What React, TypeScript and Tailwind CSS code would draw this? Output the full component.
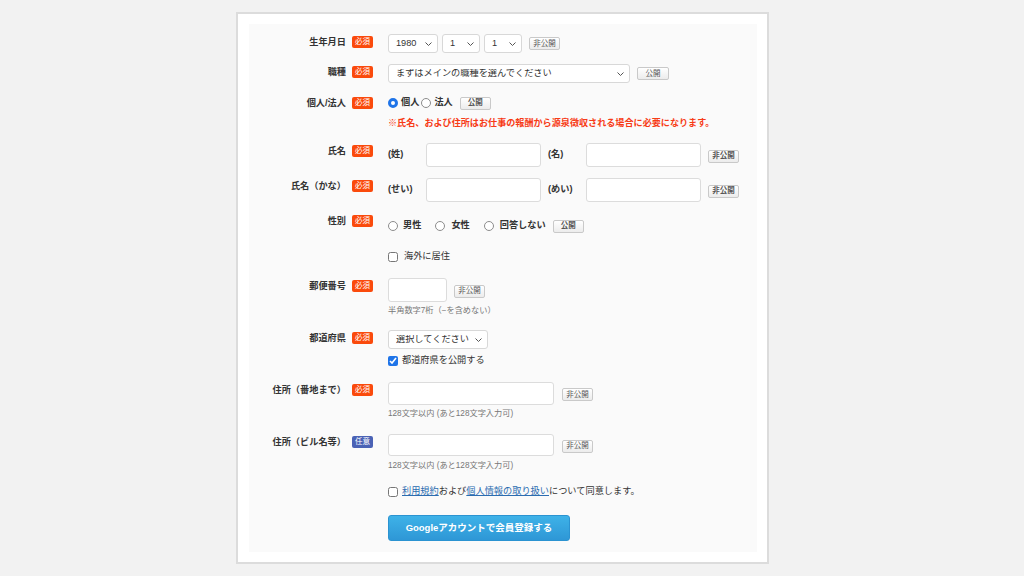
import React from "react";

const Badge = ({ optional = false }: { optional?: boolean }) =>
  optional ? (
    <span className="inline-flex h-[12px] w-[21px] shrink-0 items-center justify-center rounded-[2px] bg-[#4a62b5] text-[7.5px] leading-none text-white">
      任意
    </span>
  ) : (
    <span className="inline-flex h-[12px] w-[21px] shrink-0 items-center justify-center rounded-[2px] bg-[#fa4a0c] text-[7.5px] leading-none text-white">
      必須
    </span>
  );

function Vis({ label = "非公開", w = "w-[31px]" }: { label?: string; w?: string }) {
  return (
    <span
      className={`inline-flex h-[13px] ${w} shrink-0 items-center justify-center rounded-[2px] border border-[#c9c9c9] bg-gradient-to-b from-white to-[#ececec] text-[7.5px] leading-none text-[#555]`}
    >
      {label}
    </span>
  );
}

function Chevron() {
  return (
    <svg
      width="7"
      height="4"
      viewBox="0 0 7 4"
      className="pointer-events-none absolute right-[6px] top-1/2 -translate-y-1/2"
    >
      <path d="M0.5 0.5L3.5 3.5L6.5 0.5" stroke="#555" strokeWidth="1" fill="none" />
    </svg>
  );
}

function Select({ value, w, h = "h-[19px]" }: { value: string; w: string; h?: string }) {
  return (
    <div className={`relative ${w} ${h} shrink-0`}>
      <select
        defaultValue={value}
        className="block h-full w-full appearance-none rounded-[3px] border border-[#d8d8d8] bg-white pl-[7px] text-[9.2px] leading-none text-[#333] outline-none"
      >
        <option>{value}</option>
      </select>
      <Chevron />
    </div>
  );
}

function Radio({ checked = false }: { checked?: boolean }) {
  return (
    <input
      type="radio"
      defaultChecked={checked}
      className="m-0 block h-[10px] w-[10px] shrink-0 appearance-none rounded-full border border-[#8c8c8c] bg-white checked:border-[3px] checked:border-[#1f74e8]"
    />
  );
}

function Check({ checked = false }: { checked?: boolean }) {
  return (
    <input
      type="checkbox"
      defaultChecked={checked}
      className="m-0 block h-[10px] w-[10px] shrink-0 accent-[#1f74e8]"
    />
  );
}

function Row({
  label,
  optional = false,
  className = "",
  children,
}: {
  label: string;
  optional?: boolean;
  className?: string;
  children: React.ReactNode;
}) {
  return (
    <div className={`flex ${className}`}>
      <div className="flex w-[124px] shrink-0 items-center justify-end gap-[6px] self-start pt-[2px]">
        <span className="text-[9.2px] font-bold leading-[12px] text-[#333]">{label}</span>
        <Badge optional={optional} />
      </div>
      <div className="ml-[15px] min-w-0 flex-1">{children}</div>
    </div>
  );
}

const Hint = ({ children }: { children: React.ReactNode }) => (
  <div className="mt-[3px] h-[12px] text-[8.2px] leading-[12px] text-[#777]">{children}</div>
);

export default function App() {
  return (
    <div className="min-h-screen bg-[#f2f2f2] pt-[12px] font-['Liberation_Sans','Noto_Sans_CJK_JP',sans-serif] text-[#333]">
      <div className="ml-[236px] w-[533px] border-2 border-[#dcdcdc] bg-white pb-[10px] pl-[11px] pr-[10px] pt-[10px]">
        <div className="bg-[#fafafa] pb-[11px] pt-[10px]">
          {/* 生年月日 */}
          <Row label="生年月日">
            <div className="flex items-center">
              <Select value="1980" w="w-[50px]" />
              <div className="ml-[4px]">
                <Select value="1" w="w-[38px]" />
              </div>
              <div className="ml-[4px]">
                <Select value="1" w="w-[38px]" />
              </div>
              <div className="ml-[7px] flex">
                <Vis />
              </div>
            </div>
          </Row>

          {/* 職種 */}
          <Row label="職種" className="mt-[11px]">
            <div className="flex items-center gap-[7px]">
              <Select value="まずはメインの職種を選んでください" w="w-[242px]" />
              <Vis label="公開" w="w-[32px]" />
            </div>
          </Row>

          {/* 個人/法人 */}
          <Row label="個人/法人" className="mt-[12px]">
            <div className="flex h-[16px] items-center text-[9.2px] font-bold">
              <Radio checked />
              <span className="ml-[3px]">個人</span>
              <span className="ml-[2px] flex">
                <Radio />
              </span>
              <span className="ml-[3px]">法人</span>
              <span className="ml-[7px] flex">
                <Vis label="公開" w="w-[31px]" />
              </span>
            </div>
            <div className="mt-[6px] h-[12px] text-[9.1px] font-bold leading-[12px] text-[#f73b16]">
              ※氏名、および住所はお仕事の報酬から源泉徴収される場合に必要になります。
            </div>
          </Row>

          {/* 氏名 */}
          <Row label="氏名" className="mt-[14px]">
            <div className="flex items-center text-[9.2px] font-bold">
              <span className="w-[38px]">(姓)</span>
              <input className="block h-[24px] w-[115px] rounded-[3px] border border-[#dcdcdc] bg-white outline-none" />
              <span className="ml-[7px] w-[38px]">(名)</span>
              <input className="block h-[24px] w-[115px] rounded-[3px] border border-[#dcdcdc] bg-white outline-none" />
              <span className="ml-[7px] mt-[2px] flex">
                <Vis />
              </span>
            </div>
          </Row>

          {/* 氏名（かな） */}
          <Row label="氏名（かな）" className="mt-[11px]">
            <div className="flex items-center text-[9.2px] font-bold">
              <span className="w-[38px]">(せい)</span>
              <input className="block h-[24px] w-[115px] rounded-[3px] border border-[#dcdcdc] bg-white outline-none" />
              <span className="ml-[7px] w-[38px]">(めい)</span>
              <input className="block h-[24px] w-[115px] rounded-[3px] border border-[#dcdcdc] bg-white outline-none" />
              <span className="ml-[7px] mt-[2px] flex">
                <Vis />
              </span>
            </div>
          </Row>

          {/* 性別 */}
          <Row label="性別" className="mt-[11px]">
            <div className="mt-[5px] flex h-[16px] items-center text-[9.2px] font-bold">
              <Radio />
              <span className="ml-[5px]">男性</span>
              <span className="ml-[14px] flex">
                <Radio />
              </span>
              <span className="ml-[6px]">女性</span>
              <span className="ml-[14px] flex">
                <Radio />
              </span>
              <span className="ml-[6px]">回答しない</span>
              <span className="ml-[7px] flex">
                <Vis label="公開" w="w-[31px]" />
              </span>
            </div>
          </Row>

          {/* 海外に居住 */}
          <div className="mt-[15px] flex h-[16px] items-center pl-[139px] text-[9.2px]">
            <Check />
            <span className="ml-[6px]">海外に居住</span>
          </div>

          {/* 郵便番号 */}
          <Row label="郵便番号" className="mt-[13px]">
            <div className="flex items-center gap-[7px]">
              <input className="block h-[24px] w-[59px] rounded-[3px] border border-[#dcdcdc] bg-white outline-none" />
              <span className="mt-[2px] flex">
                <Vis />
              </span>
            </div>
            <Hint>半角数字7桁（−を含めない）</Hint>
          </Row>

          {/* 都道府県 */}
          <Row label="都道府県" className="mt-[13px]">
            <Select value="選択してください" w="w-[100px]" />
            <div className="mt-[4px] flex h-[16px] items-center text-[9.2px]">
              <Check checked />
              <span className="ml-[4px]">都道府県を公開する</span>
            </div>
          </Row>

          {/* 住所（番地まで） */}
          <Row label="住所（番地まで）" className="mt-[13px]">
            <div className="flex items-center gap-[8px]">
              <input className="block h-[23px] w-[166px] rounded-[3px] border border-[#dcdcdc] bg-white outline-none" />
              <span className="mt-[2px] flex">
                <Vis />
              </span>
            </div>
            <Hint>128文字以内 (あと128文字入力可)</Hint>
          </Row>

          {/* 住所（ビル名等） */}
          <Row label="住所（ビル名等）" optional className="mt-[14px]">
            <div className="flex items-center gap-[8px]">
              <input className="block h-[22px] w-[166px] rounded-[3px] border border-[#dcdcdc] bg-white outline-none" />
              <span className="mt-[2px] flex">
                <Vis />
              </span>
            </div>
            <div className="mt-[4px] h-[12px] text-[8.2px] leading-[12px] text-[#777]">
              128文字以内 (あと128文字入力可)
            </div>
          </Row>

          {/* 同意 */}
          <div className="mt-[12px] flex h-[16px] items-center pl-[139px] text-[9.2px]">
            <Check />
            <span className="ml-[4px]">
              <a className="text-[#2b6cb0] underline">利用規約</a>および
              <a className="text-[#2b6cb0] underline">個人情報の取り扱い</a>について同意します。
            </span>
          </div>

          {/* 登録ボタン */}
          <div className="mt-[15px] pl-[139px]">
            <button className="block h-[26px] w-[182px] rounded-[3px] border border-[#2b93d1] bg-gradient-to-b from-[#3eb2e8] to-[#2e97d6] text-[9.5px] font-bold text-white">
              Googleアカウントで会員登録する
            </button>
          </div>
        </div>
      </div>
    </div>
  );
}
